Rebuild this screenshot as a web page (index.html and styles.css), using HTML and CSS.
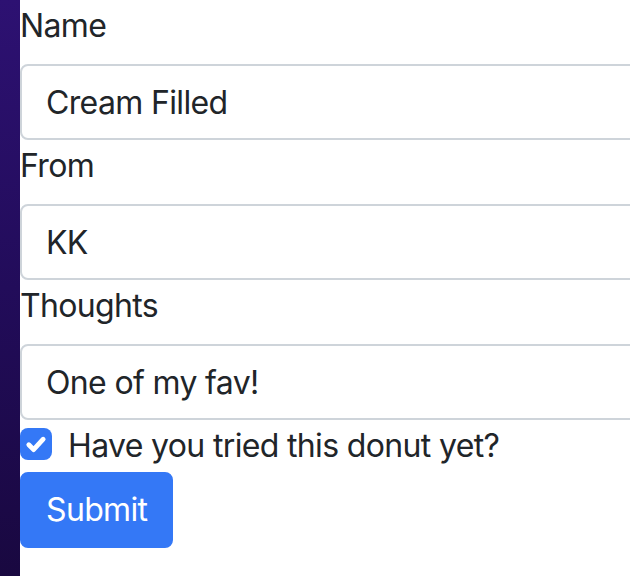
FILE: index.html
```html
<!DOCTYPE html>
<html>
<head>
<meta charset="utf-8">
<link rel="stylesheet" href="styles.css">
</head>
<body>
<div class="side"></div>
<main class="panel">
  <form class="form">
    <label class="label" for="name">Name</label>
    <input class="control" id="name" type="text" value="Cream Filled">
    <label class="label" for="from">From</label>
    <input class="control" id="from" type="text" value="KK">
    <label class="label" for="thoughts">Thoughts</label>
    <input class="control" id="thoughts" type="text" value="One of my fav!">
    <div class="check">
      <span class="box">
        <svg viewBox="0 0 20 20" width="32" height="32"><path d="M5.5 10.5l3 3 6-6.5" fill="none" stroke="#fff" stroke-width="3" stroke-linecap="round" stroke-linejoin="round"/></svg>
      </span>
      <span class="check-label">Have you tried this donut yet?</span>
    </div>
    <button class="btn" type="button">Submit</button>
  </form>
</main>
</body>
</html>
```

FILE: styles.css
```css
html, body {
  margin: 0;
  height: 576px;
  overflow: hidden;
}
body {
  display: flex;
  background: linear-gradient(180deg, #2d1172 0%, #220c5a 50%, #190840 100%);
  font-family: Inter, "Liberation Sans", sans-serif;
  font-size: 32px;
  line-height: 48px;
  letter-spacing: -0.65px;
  color: #212529;
}
.side {
  width: 20px;
  flex: 0 0 20px;
}
.panel {
  flex: 1 1 auto;
  min-width: 0;
  overflow: hidden;
  background: #fff;
}
.form {
  width: 700px;
  display: flex;
  flex-direction: column;
  align-items: flex-start;
  padding-top: 2px;
}
.label {
  display: block;
  margin-bottom: 14px;
}
.control {
  box-sizing: border-box;
  width: 100%;
  height: 76px;
  padding: 12px 24px;
  border: 2px solid #ced4da;
  border-radius: 8px;
  font: inherit;
  letter-spacing: inherit;
  color: #212529;
  background: #fff;
  outline: none;
  margin: 0 0 2px 0;
}
.check {
  display: flex;
  align-items: flex-start;
  gap: 16px;
  height: 48px;
  margin-bottom: 2px;
}
.box {
  margin-top: 6px;
  width: 32px;
  height: 32px;
  border-radius: 8px;
  background: #3478f6;
  display: flex;
}
.check-label {
  display: block;
}
.btn {
  font: inherit;
  letter-spacing: inherit;
  color: #fff;
  background: #3478f6;
  border: 2px solid #3478f6;
  border-radius: 8px;
  padding: 12px 24px;
  height: 76px;
}
```
